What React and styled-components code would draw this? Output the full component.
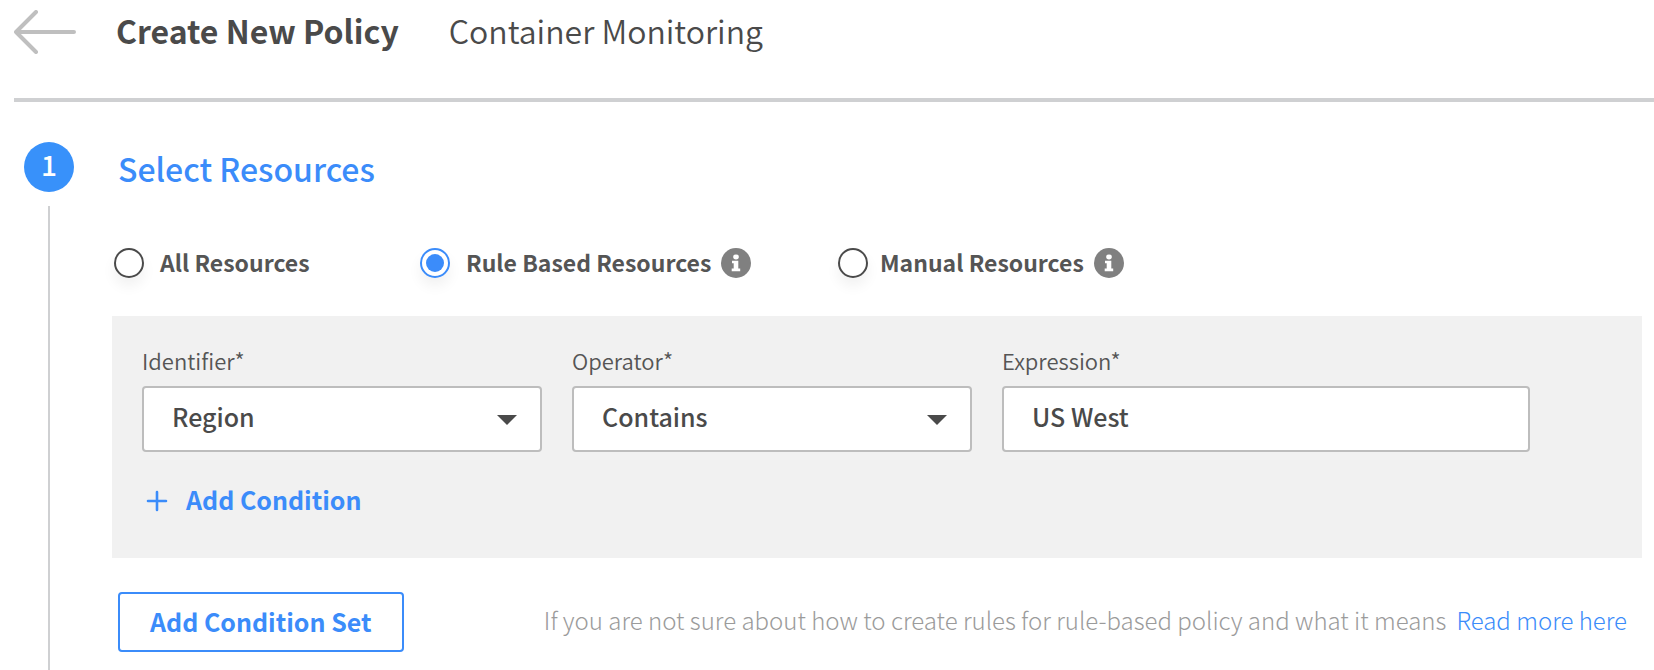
import React, { useState } from "react";
import styled, { createGlobalStyle, css } from "styled-components";

const color = {
  text: "#4a4a4a",
  label: "#555555",
  blue: "#3b8cfa",
  badge: "#3891fa",
  rule: "#cfd0d2",
  border: "#bdbdbd",
  panel: "#f1f1f1",
  hint: "#9b9b9b",
};

const GlobalStyle = createGlobalStyle`
  *, *::before, *::after { box-sizing: border-box; }
  body {
    margin: 0;
    background: #fff;
    color: ${color.text};
    font-family: "Noto Sans CJK SC", "Noto Sans", sans-serif;
  }
  button, input, select { font: inherit; color: inherit; margin: 0; }
`;

const Page = styled.div`
  display: flex;
  flex-direction: column;
  min-height: 100vh;
`;

const Header = styled.header`
  display: flex;
  align-items: flex-start;
  margin-left: 14px;
  padding-bottom: 34px;
  border-bottom: 4px solid ${color.rule};
`;

const PlainButton = styled.button`
  display: flex;
  align-items: center;
  padding: 0;
  border: 0;
  background: none;
  cursor: pointer;
`;

const BackButton = styled(PlainButton)`
  height: 64px;
  margin-right: 40px;
`;

const Title = styled.h1`
  margin: 0 50px 0 0;
  font-size: 32px;
  font-weight: 700;
  line-height: 60px;
`;

const Subtitle = styled.p`
  margin: 0;
  font-size: 32px;
  font-weight: 350;
  line-height: 60px;
`;

const Step = styled.main`
  display: flex;
  flex: 1;
  gap: 38px;
  padding: 40px 12px 0 24px;
`;

const Rail = styled.div`
  display: flex;
  flex-direction: column;
  align-items: center;
  gap: 14px;
`;

const Badge = styled.span`
  width: 50px;
  height: 50px;
  border-radius: 50%;
  background: ${color.badge};
  color: #fff;
  font-size: 28px;
  font-weight: 500;
  line-height: 44px;
  text-align: center;
`;

const RailLine = styled.span`
  flex: 1;
  width: 2px;
  background: ${color.rule};
`;

const Body = styled.section`
  flex: 1;
  min-width: 0;
  padding-bottom: 18px;
`;

const StepTitle = styled.h2`
  margin: 0 0 54px;
  padding-left: 6px;
  color: ${color.blue};
  font-size: 32px;
  font-weight: 500;
  line-height: 52px;
`;

const Choices = styled.div`
  display: grid;
  grid-template-columns: 306px 418px auto;
  justify-content: start;
  margin-bottom: 38px;
  padding-left: 2px;
`;

const Choice = styled.div`
  display: flex;
  align-items: center;
  gap: 10px;
  height: 30px;
`;

const ChoiceLabel = styled.label`
  display: flex;
  align-items: center;
  gap: ${(p) => p.$gap}px;
  color: ${color.label};
  font-size: 23px;
  font-weight: 700;
  line-height: 26px;
  white-space: nowrap;
  cursor: pointer;
`;

const ChoiceText = styled.span`
  padding-bottom: 2px;
`;

const Radio = styled.input`
  appearance: none;
  display: grid;
  place-content: center;
  width: 30px;
  height: 30px;
  border: 2px solid ${color.text};
  border-radius: 50%;
  background: #fff;
  box-shadow: 0 8px 14px rgba(0, 0, 0, 0.06);
  cursor: pointer;

  &:checked {
    border-color: ${color.blue};
  }
  &:checked::before {
    content: "";
    width: 18px;
    height: 18px;
    border-radius: 50%;
    background: ${color.blue};
  }
`;

const Panel = styled.div`
  padding: 30px 112px 40px 30px;
  background: ${color.panel};
`;

const Fields = styled.div`
  display: grid;
  grid-template-columns: 400fr 400fr 528fr;
  gap: 30px;
  margin-bottom: 32px;
`;

const Field = styled.div`
  display: flex;
  flex-direction: column;
  gap: 12px;
  min-width: 0;
`;

const FieldLabel = styled.label`
  color: ${color.label};
  font-size: 22px;
  font-weight: 350;
  line-height: 28px;
`;

const control = css`
  appearance: none;
  width: 100%;
  height: 66px;
  padding: 0 28px 6px;
  border: 2px solid ${color.border};
  border-radius: 4px;
  background: #fff;
  font-size: 25px;
  font-weight: 500;
`;

const TextInput = styled.input`
  ${control}
`;

const Select = styled.select`
  ${control}
`;

const SelectWrap = styled.div`
  position: relative;
`;

const Caret = styled.svg`
  position: absolute;
  top: 28px;
  right: 25px;
  pointer-events: none;
`;

const AddCondition = styled(PlainButton)`
  gap: 18px;
  padding-left: 4px;
  color: ${color.blue};
  font-size: 25px;
  font-weight: 700;
  line-height: 30px;

  span {
    padding-bottom: 4px;
  }
`;

const Footer = styled.footer`
  display: flex;
  align-items: center;
  justify-content: space-between;
  gap: 24px;
  margin-top: 34px;
  padding: 0 15px 0 6px;
`;

const OutlineButton = styled.button`
  height: 60px;
  padding: 0 30px 2px;
  border: 2px solid ${color.blue};
  border-radius: 4px;
  background: #fff;
  color: ${color.blue};
  font-size: 25px;
  font-weight: 700;
  white-space: nowrap;
  cursor: pointer;
`;

const Hint = styled.p`
  margin: 0;
  padding-bottom: 4px;
  color: ${color.hint};
  font-size: 24px;
  font-weight: 300;
  line-height: 30px;
`;

const HintLink = styled.a`
  margin-left: 10px;
  color: ${color.blue};
  text-decoration: none;
`;

const choices = [
  { id: "all", label: "All Resources", gap: 16 },
  { id: "rule", label: "Rule Based Resources", gap: 16, info: true },
  { id: "manual", label: "Manual Resources", gap: 12, info: true },
];

function InfoIcon() {
  return (
    <svg width="30" height="30" viewBox="0 0 30 30" aria-hidden="true">
      <circle cx="15" cy="15" r="15" fill="#808080" />
      <ellipse cx="15" cy="9" rx="2.8" ry="2.4" fill="#fff" />
      <path d="M11 12.7H17.3V20.6H19.2V23.2H10.7V20.6H12.7V15.3H11Z" fill="#fff" />
    </svg>
  );
}

function SelectField({ id, label, options }) {
  return (
    <Field>
      <FieldLabel htmlFor={id}>{label}</FieldLabel>
      <SelectWrap>
        <Select id={id}>
          {options.map((o) => (
            <option key={o}>{o}</option>
          ))}
        </Select>
        <Caret width="20" height="11" viewBox="0 0 20 11" aria-hidden="true">
          <path d="M0 1H20L10 11Z" fill={color.text} />
        </Caret>
      </SelectWrap>
    </Field>
  );
}

export default function App() {
  const [mode, setMode] = useState("rule");
  return (
    <>
      <GlobalStyle />
      <Page>
        <Header>
          <BackButton type="button" aria-label="Back">
            <svg width="62" height="44" viewBox="0 0 62 44" fill="none" stroke="#bfbfbf" strokeWidth="4" strokeLinecap="round" strokeLinejoin="round">
              <path d="M22 2L2 22L22 42M2 22H60" />
            </svg>
          </BackButton>
          <Title>Create New Policy</Title>
          <Subtitle>Container Monitoring</Subtitle>
        </Header>
        <Step>
          <Rail>
            <Badge>1</Badge>
            <RailLine />
          </Rail>
          <Body>
            <StepTitle>Select Resources</StepTitle>
            <Choices role="radiogroup" aria-label="Select Resources">
              {choices.map((c) => (
                <Choice key={c.id}>
                  <ChoiceLabel $gap={c.gap}>
                    <Radio
                      type="radio"
                      name="resources"
                      checked={mode === c.id}
                      onChange={() => setMode(c.id)}
                    />
                    <ChoiceText>{c.label}</ChoiceText>
                  </ChoiceLabel>
                  {c.info && (
                    <PlainButton type="button" aria-label={`About ${c.label}`}>
                      <InfoIcon />
                    </PlainButton>
                  )}
                </Choice>
              ))}
            </Choices>
            <Panel>
              <Fields>
                <SelectField id="identifier" label="Identifier*" options={["Region"]} />
                <SelectField id="operator" label="Operator*" options={["Contains"]} />
                <Field>
                  <FieldLabel htmlFor="expression">Expression*</FieldLabel>
                  <TextInput id="expression" type="text" defaultValue="US West" />
                </Field>
              </Fields>
              <AddCondition type="button">
                <svg width="22" height="22" viewBox="0 0 22 22" stroke="currentColor" strokeWidth="2.6" strokeLinecap="round" aria-hidden="true">
                  <path d="M11 2V20M2 11H20" />
                </svg>
                <span>Add Condition</span>
              </AddCondition>
            </Panel>
            <Footer>
              <OutlineButton type="button">Add Condition Set</OutlineButton>
              <Hint>
                If you are not sure about how to create rules for rule-based policy and what it means
                <HintLink href="#rules">Read more here</HintLink>
              </Hint>
            </Footer>
          </Body>
        </Step>
      </Page>
    </>
  );
}
